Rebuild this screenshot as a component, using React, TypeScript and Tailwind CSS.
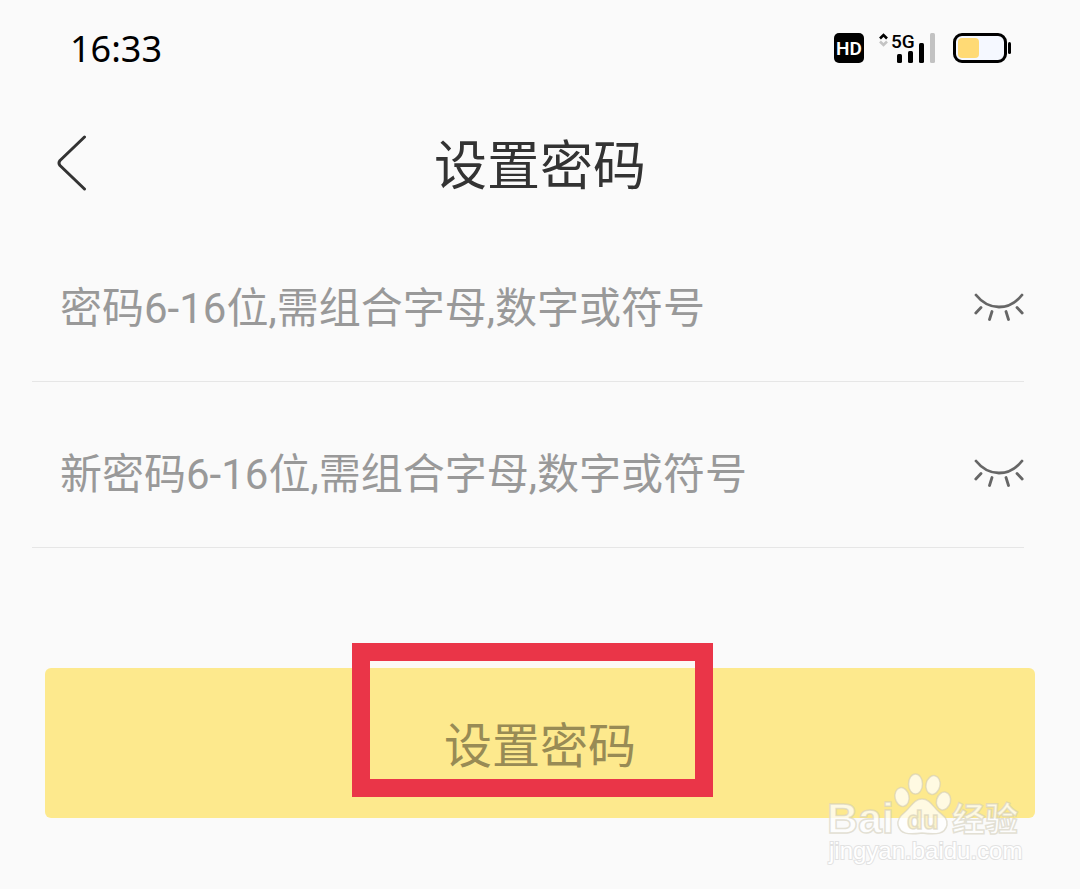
import { useState } from "react";

function StatusIcons() {
  return (
    <div className="flex items-center" aria-label="HD 5G">
      <svg width="180" height="50" viewBox="0 -8 180 50" aria-hidden="true">
        <rect x="2" y="2" width="30" height="30" rx="5" fill="#000" />
        <text x="17" y="24" textAnchor="middle" fontFamily="Roboto, sans-serif" fontWeight="600" fontSize="19" fill="#fff">HD</text>
        <path d="M48 7.500l3.500-3.500 3.500 3.500" fill="none" stroke="#000" strokeWidth="2.600" />
        <path d="M48 10.500l3.500 3.500 3.500-3.500" fill="none" stroke="#c4c4c4" strokeWidth="2.600" />
        <text x="59" y="16.500" fontFamily="Roboto, sans-serif" fontWeight="500" fontSize="19" fill="#000">5G</text>
        <rect x="65" y="23" width="5" height="9" rx="1.500" fill="#000" />
        <rect x="76" y="20" width="5" height="12" rx="1.500" fill="#000" />
        <rect x="87" y="12" width="5" height="20" rx="1.500" fill="#000" />
        <rect x="98" y="2" width="5" height="30" rx="1.500" fill="#c2c2c2" />
        <rect x="122.500" y="3.500" width="51" height="27" rx="7.500" fill="#f5f8ff" stroke="#000" strokeWidth="3" />
        <rect x="126" y="7" width="21" height="20" rx="4" fill="#ffda75" />
        <path d="M177.500 12.500v9" stroke="#000" strokeWidth="3" strokeLinecap="round" />
      </svg>
    </div>
  );
}

function ClosedEye() {
  return (
    <svg width="50" height="28" viewBox="0 0 50 28" fill="none" stroke="#666" strokeWidth="2.800" strokeLinecap="round" aria-hidden="true">
      <path d="M2 2c6 7.500 14 12 23 12S42 9.500 48 2" />
      <path d="M7 14.500L1.800 20M18 18.500L15.500 26.500M32 18.500l2.500 8M43 14.500l5.200 5.500" />
    </svg>
  );
}

function PasswordField({ id, placeholder }: { id: string; placeholder: string }) {
  const [visible, setVisible] = useState(false);
  return (
    <div className="ml-8 mr-14 flex h-[166px] items-center border-b border-[#e6e6e6] pl-7 pt-4">
      <input
        id={id}
        type={visible ? "text" : "password"}
        aria-label={placeholder}
        placeholder={placeholder}
        className="h-24 min-w-0 flex-1 bg-transparent pt-1 text-[42px] leading-[80px] text-[#333] outline-none placeholder:text-[#999] placeholder:opacity-100"
      />
      <button type="button" aria-label="显示密码" onClick={() => setVisible(!visible)}>
        <ClosedEye />
      </button>
    </div>
  );
}

function Watermark() {
  return (
    <svg width="204" height="100" viewBox="0 0 204 100" className="pointer-events-none absolute right-1.5 top-[100px]" aria-label="Baidu 经验">
      <g fill="#fff" fillOpacity="0.75" stroke="#d2cdb9" strokeOpacity="0.6" strokeWidth="1.500">
        <ellipse cx="77" cy="29" rx="7" ry="9.500" transform="rotate(-12 77 29)" />
        <ellipse cx="90.500" cy="16" rx="7" ry="10" />
        <ellipse cx="108" cy="17" rx="7" ry="9.500" transform="rotate(12 108 17)" />
        <ellipse cx="118.500" cy="33" rx="7" ry="9" transform="rotate(15 118.500 33)" />
        <path d="M97 31c-8 0-11 8-17 13-5 4-8 8-7 13 2 9 10 10 24 8 15 2 23 1 25-8 1-6-3-9-8-13-6-5-9-13-17-13Z" />
        <text x="2" y="65" fontFamily="'Liberation Sans', sans-serif" fontWeight="700" fontSize="43">Bai</text>
        <text x="98" y="61" textAnchor="middle" fontFamily="'Liberation Sans', sans-serif" fontWeight="700" fontSize="26" fill="#fcefb8">du</text>
        <text x="127" y="63" fontFamily="'Noto Sans CJK SC', sans-serif" fontWeight="700" fontSize="33">经验</text>
      </g>
      <text x="4" y="91" fontFamily="'Liberation Sans', sans-serif" fontSize="24" fill="#fff" stroke="#e2e2e2" strokeWidth="2" paintOrder="stroke">jingyan.baidu.com</text>
    </svg>
  );
}

export default function App() {
  return (
    <main className="min-h-screen bg-[#fafafa] pb-16 font-[Roboto,'Noto_Sans_CJK_SC',sans-serif]">
      <div className="flex h-24 items-center justify-between pl-[70px] pr-[68px]">
        <time className="pt-0.5 font-['Noto_Sans',sans-serif] text-[36px] leading-none text-black">16:33</time>
        <StatusIcons />
      </div>
      <header className="grid h-[120px] grid-cols-[1fr_auto_1fr] items-center pt-3.5">
        <button type="button" aria-label="返回" className="ml-14 w-8">
          <svg width="32" height="56" viewBox="0 0 32 56" fill="none" stroke="#333" strokeWidth="3" strokeLinecap="round" strokeLinejoin="round" aria-hidden="true">
            <path d="M28.500 2L4 25.500Q2 28 4 30.500L28.500 54" />
          </svg>
        </button>
        <h1 className="pt-2 text-[53px] leading-none text-[#333]">设置密码</h1>
      </header>
      <form onSubmit={(e) => e.preventDefault()}>
        <PasswordField id="password" placeholder="密码6-16位,需组合字母,数字或符号" />
        <PasswordField id="new-password" placeholder="新密码6-16位,需组合字母,数字或符号" />
        <div className="relative mx-[45px] mt-[120px]">
          <button type="submit" className="h-[150px] w-full rounded-md bg-[#fde98d] pt-2 text-[48px] text-[#988b55]">
            设置密码
          </button>
          <div className="pointer-events-none absolute -top-[25px] left-1/2 h-[154px] w-[361px] -translate-x-[188px] border-[18px] border-[#ea3548]">
            <div className="h-[7px] bg-[#fdf9f5]" />
          </div>
          <Watermark />
        </div>
      </form>
    </main>
  );
}
